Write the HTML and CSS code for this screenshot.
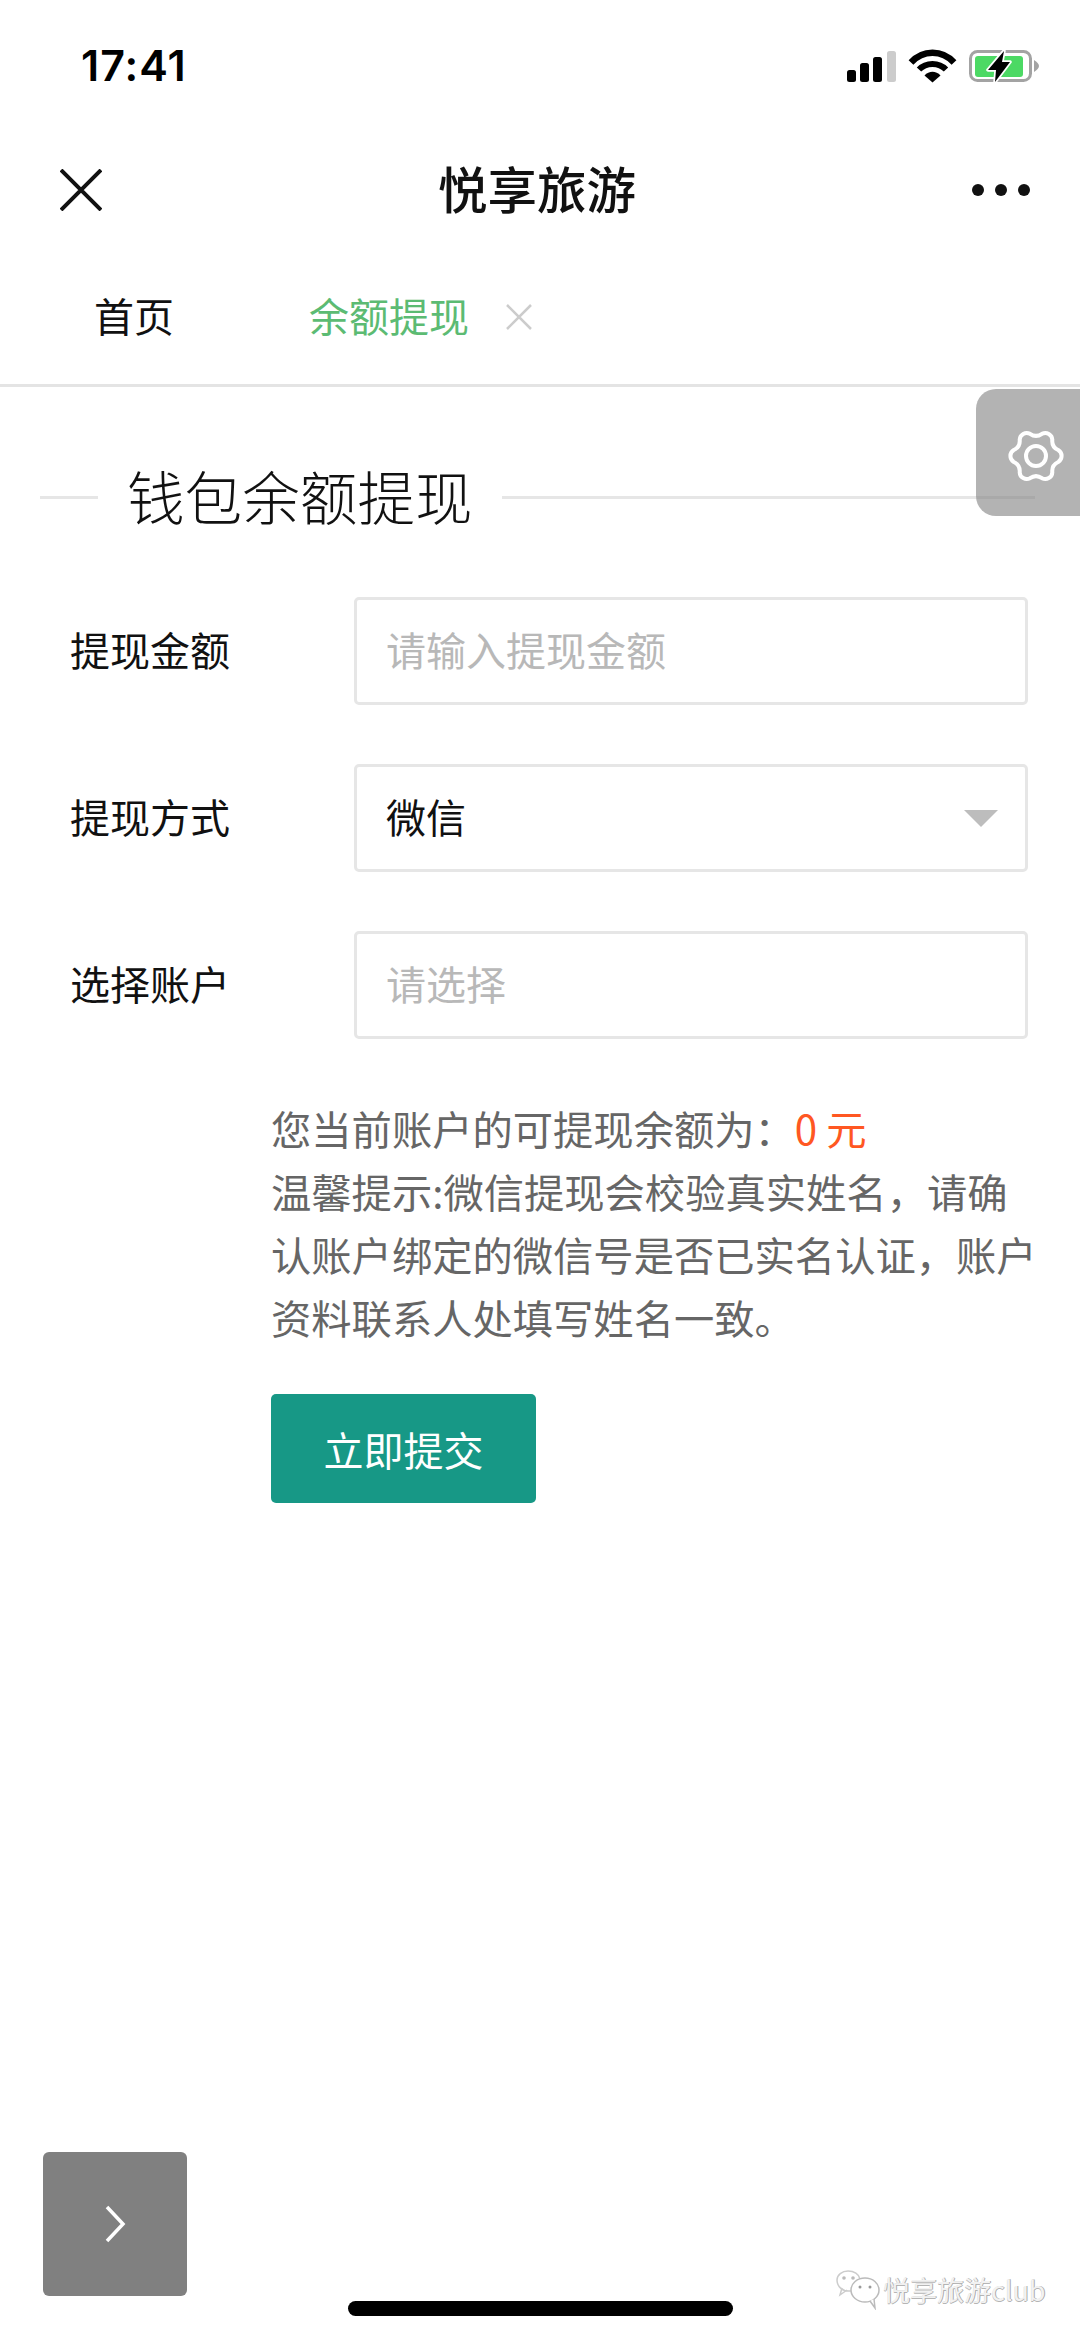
FILE: index.html
```html
<!DOCTYPE html>
<html lang="zh-CN">
<head>
<meta charset="utf-8">
<title>悦享旅游</title>
<link rel="stylesheet" href="styles.css">
</head>
<body>
<div class="phone">
  <header class="status">
    <span class="time">17:41</span>
    <svg class="status-icons" width="192" height="36" viewBox="0 0 192 36">
      <rect x="0" y="23" width="9" height="12" rx="2.5" fill="#000"/>
      <rect x="13" y="16" width="9" height="19" rx="2.5" fill="#000"/>
      <rect x="26" y="10" width="9" height="25" rx="2.5" fill="#000"/>
      <rect x="40" y="4" width="9" height="31" rx="2.5" fill="#ccc"/>
      <path d="M64 15.500 C76 2.500 95 2.500 107 15.500" fill="none" stroke="#000" stroke-width="6.500"/>
      <path d="M72 22.500 C79 15 92 15 99 22.500" fill="none" stroke="#000" stroke-width="6"/>
      <path d="M77.500 28.500 C82 23.500 89 23.500 93.500 28.500 L85.500 35.500 Z" fill="#000"/>
      <rect x="123.500" y="4.500" width="60" height="29" rx="7" fill="none" stroke="#a3a3a3" stroke-width="3"/>
      <rect x="128" y="9" width="48" height="21" rx="3" fill="#4cd964"/>
      <path d="M187 13 C190 15 192 17 192 19 C192 21 190 23 187 25 Z" fill="#a3a3a3"/>
      <path d="M157 4 L141 23 L149 23 L148 35 L163 15 L155 15 Z" fill="#000" stroke="#fff" stroke-width="3.500" stroke-linejoin="round" paint-order="stroke"/>
    </svg>
  </header>

  <nav class="navbar">
    <svg class="nav-close" width="42" height="42" viewBox="0 0 42 42">
      <path d="M1 1 L41 41 M41 1 L1 41" stroke="#111" stroke-width="4" fill="none"/>
    </svg>
    <h1 class="nav-title">悦享旅游</h1>
    <svg class="nav-more" width="58" height="12" viewBox="0 0 58 12">
      <circle cx="6" cy="6" r="6" fill="#111"/>
      <circle cx="29" cy="6" r="6" fill="#111"/>
      <circle cx="52" cy="6" r="6" fill="#111"/>
    </svg>
  </nav>

  <div class="tabs">
    <span class="tab">首页</span>
    <span class="tab tab-active">余额提现</span>
    <svg class="tab-close" width="26" height="26" viewBox="0 0 26 26">
      <path d="M1 1 L25 25 M25 1 L1 25" stroke="#ccc" stroke-width="2.500" fill="none"/>
    </svg>
  </div>

  <main class="content">
    <div class="legend">
      <span class="legend-line legend-short"></span>
      <h2 class="legend-title">钱包余额提现</h2>
      <span class="legend-line legend-long"></span>
    </div>

    <form class="form">
      <div class="row">
        <span class="label">提现金额</span>
        <div class="field placeholder">请输入提现金额</div>
      </div>
      <div class="row">
        <span class="label">提现方式</span>
        <div class="field field-select">微信<span class="caret"></span></div>
      </div>
      <div class="row">
        <span class="label">选择账户</span>
        <div class="field placeholder">请选择</div>
      </div>
    </form>

    <section class="notice">
      <p class="notice-line">您当前账户的可提现余额为：<span class="amount">0 元</span></p>
      <p class="notice-line">温馨提示:微信提现会校验真实姓名，请确认账户绑定的微信号是否已实名认证，账户资料联系人处填写姓名一致。</p>
      <button class="submit" type="button">立即提交</button>
    </section>
  </main>

  <div class="settings">
    <svg width="60" height="60" viewBox="-30 -30 60 60">
      <path d="M22.200 -6 A7 7 0 0 1 22.200 6 Q15.600 9 16.300 16.300 A7 7 0 0 1 6 22.200 Q0 18 -6 22.200 A7 7 0 0 1 -16.300 16.300 Q-15.600 9 -22.200 6 A7 7 0 0 1 -22.200 -6 Q-15.600 -9 -16.300 -16.300 A7 7 0 0 1 -6 -22.200 Q0 -18 6 -22.200 A7 7 0 0 1 16.300 -16.300 Q15.600 -9 22.200 -6 Z" fill="none" stroke="#fff" stroke-width="4"/>
      <circle cx="0" cy="0" r="10" fill="none" stroke="#fff" stroke-width="4"/>
    </svg>
  </div>

  <div class="next">
    <svg width="22" height="38" viewBox="0 0 22 38">
      <path d="M3 2 L19 19 L3 36" fill="none" stroke="#fff" stroke-width="3.500"/>
    </svg>
  </div>

  <div class="watermark">
    <svg class="wm-icon" width="46" height="40" viewBox="0 0 46 40">
      <path d="M16 21 C7 22 2 16 2 10 C2 5 7 1 13 1 C19 1 24 4 25 9" fill="none" stroke="#ccc" stroke-width="1.500"/>
      <path d="M7 18 L5 25 L12 20" fill="none" stroke="#ccc" stroke-width="1.500"/>
      <ellipse cx="30" cy="20" rx="14" ry="12" fill="#fff" stroke="#bbb" stroke-width="1.500"/>
      <path d="M35 31 L40 38 L39 29" fill="#fff" stroke="#bbb" stroke-width="1.500"/>
      <circle cx="9" cy="8" r="1.800" fill="#bbb"/>
      <circle cx="18" cy="8" r="1.800" fill="#bbb"/>
      <circle cx="25" cy="17" r="1.500" fill="#999"/>
      <circle cx="35" cy="17" r="1.500" fill="#999"/>
    </svg>
    <span class="wm-text">悦享旅游club</span>
  </div>

  <div class="home-bar"></div>
</div>
</body>
</html>
```
FILE: styles.css
```css
* { box-sizing: border-box; }
html, body { margin: 0; padding: 0; background: #fff; }
body {
  font-family: "Noto Sans CJK SC", "Liberation Sans", sans-serif;
  color: #111;
}
.phone {
  position: relative;
  width: 1080px;
  height: 2339px;
  overflow: hidden;
  background: #fff;
}
.status {
  height: 130px;
  display: flex;
  align-items: center;
  justify-content: space-between;
  padding: 0 41px 0 81px;
}
.time {
  font-family: Inter, "Liberation Sans", sans-serif;
  font-weight: 600;
  font-size: 43px;
  letter-spacing: 1px;
  line-height: 50px;
  color: #000;
}
.status-icons { display: block; }
.navbar {
  height: 120px;
  display: flex;
  align-items: center;
  justify-content: space-between;
  padding: 0 50px 0 60px;
}
.nav-title {
  margin: 0 0 4px;
  font-size: 49.5px;
  line-height: 60px;
  font-weight: 500;
  color: #111;
}
.tabs {
  height: 137px;
  display: flex;
  align-items: center;
  padding: 0 0 2px 94px;
  border-bottom: 3px solid #e4e4e4;
}
.tab {
  font-size: 40px;
  line-height: 50px;
  margin-bottom: 3px;
  color: #111;
}
.tab-active {
  margin-left: 135px;
  color: #5cbb73;
}
.tab-close { margin-left: 37px; margin-top: 2px; }
.legend {
  height: 80px;
  margin-top: 70px;
  padding: 0 45px 0 40px;
  display: flex;
  align-items: center;
  gap: 29px;
}
.legend-line { height: 3px; background: #e6e6e6; }
.legend-short { width: 58px; }
.legend-long { flex: 1; }
.legend-title {
  margin: 0 0 4px;
  font-size: 57.6px;
  line-height: 80px;
  font-weight: 300;
  color: #111;
}
.form {
  margin-top: 60px;
  padding: 0 52px 0 70px;
  display: flex;
  flex-direction: column;
  gap: 59px;
}
.row { display: flex; align-items: center; height: 108px; }
.label {
  width: 284px;
  padding-bottom: 4px;
  font-size: 40px;
  line-height: 50px;
  color: #111;
}
.field {
  flex: 1;
  height: 108px;
  display: flex;
  align-items: center;
  justify-content: space-between;
  padding: 0 27px 5px 29px;
  border: 3px solid #e6e6e6;
  border-radius: 5px;
  font-size: 40px;
  line-height: 50px;
  color: #111;
  background: #fff;
}
.placeholder { color: #b8b8b8; }
.caret {
  width: 0;
  height: 0;
  margin-top: 5px;
  border-left: 17px solid transparent;
  border-right: 17px solid transparent;
  border-top: 17px solid #bdbdbd;
}
.notice {
  margin: 57px 0 0 271px;
  width: 772px;
}
.notice-line {
  margin: 0;
  font-size: 40.3px;
  line-height: 63px;
  color: #666;
}
.amount { color: #ff5722; }
.submit {
  display: block;
  margin: 46px 0 0;
  width: 265px;
  height: 109px;
  border: 0;
  border-radius: 5px;
  background: #179886;
  color: #fff;
  font-family: inherit;
  font-size: 40px;
  line-height: 50px;
  padding: 0;
}
.settings {
  position: absolute;
  top: 389px;
  right: 0;
  width: 104px;
  height: 127px;
  display: flex;
  align-items: center;
  justify-content: flex-end;
  padding: 6px 14px 0 0;
  background: rgba(128, 128, 128, 0.6);
  border-radius: 20px 0 0 20px;
}
.settings svg { display: block; }
.next {
  position: absolute;
  left: 43px;
  top: 2152px;
  width: 144px;
  height: 144px;
  display: flex;
  align-items: center;
  justify-content: center;
  background: #808080;
  border-radius: 6px;
}
.home-bar {
  position: absolute;
  left: 348px;
  top: 2301px;
  width: 385px;
  height: 15px;
  border-radius: 8px;
  background: #000;
}
.watermark {
  position: absolute;
  left: 835px;
  top: 2270px;
  display: flex;
  align-items: center;
  gap: 2px;
}
.wm-icon { display: block; }
.wm-text {
  font-size: 27px;
  line-height: 40px;
  color: #f2f2f2;
  text-shadow: 1px 0 0 #aaa, 0 1px 0 #b5b5b5;
}
```
